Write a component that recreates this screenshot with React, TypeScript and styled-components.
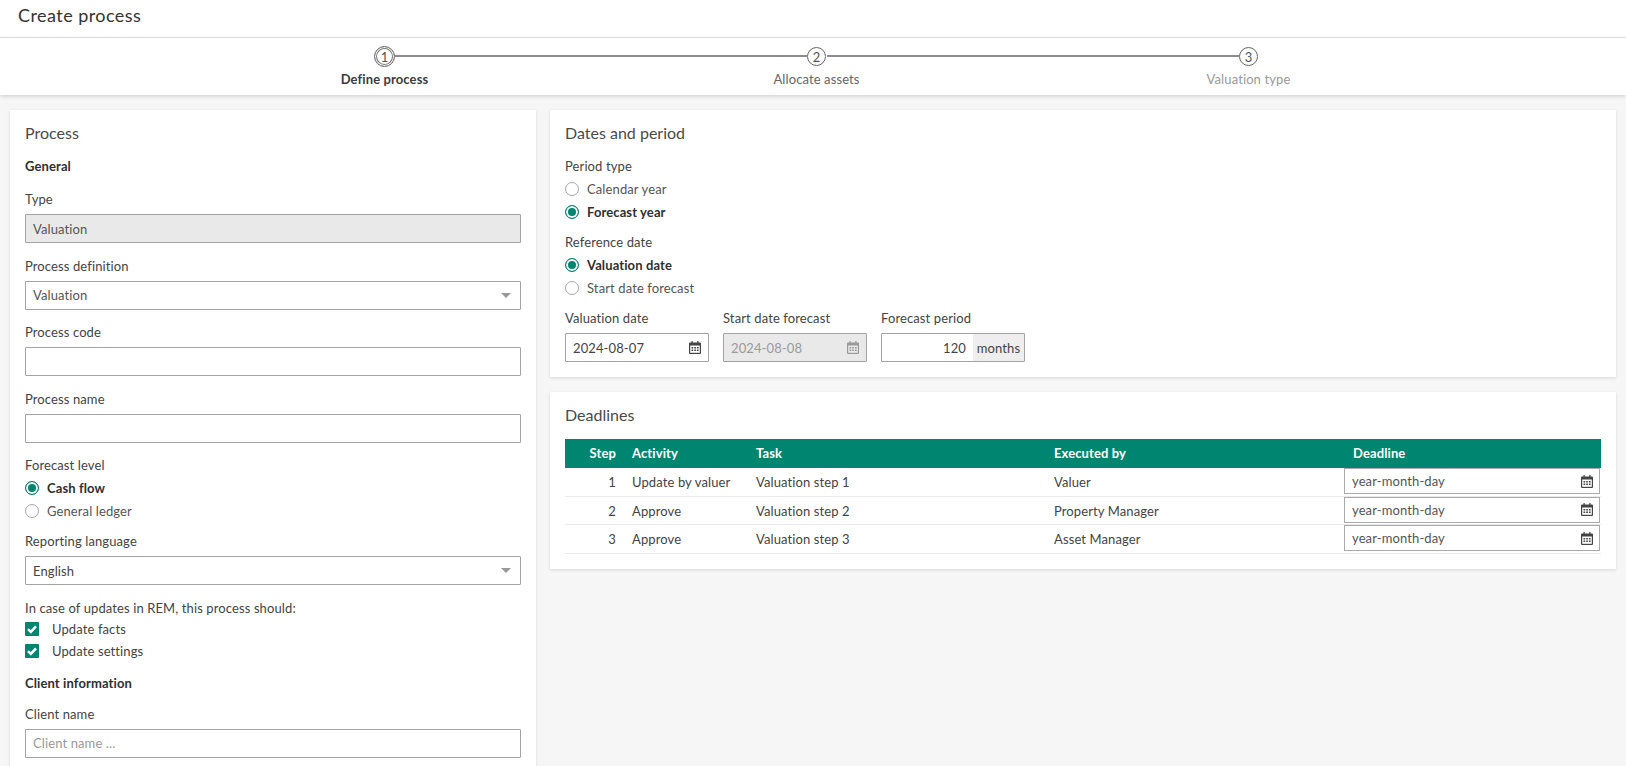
import styled, { createGlobalStyle } from "styled-components";

////////////////////////////////////////////////////
//////////////////// GLOBAL ////////////////////////
////////////////////////////////////////////////////

const GlobalStyle = createGlobalStyle`
   html, body {
      margin: 0;
      height: 100%;
      overflow: hidden;
      background: #f6f6f6;
      color: #3c3c3c;
      font-family: "Lato", "Open Sans", sans-serif;
      font-size: 13px;
      letter-spacing: 0.11px;
   }
   * {
      box-sizing: border-box;
   }
`;

////////////////////////////////////////////////////
//////////////////// ICONS /////////////////////////
////////////////////////////////////////////////////

const CalendarIcon = ({ muted }: { muted?: boolean }) => (
   <CalendarSvg viewBox="0 0 12 13" $muted={muted}>
      <path d="M2.5 0h1.2v1.5h4.6V0h1.2v1.5H11a1 1 0 0 1 1 1V12a1 1 0 0 1-1 1H1a1 1 0 0 1-1-1V2.500a1 1 0 0 1 1-1h1.500z" />
      <path className="hole" d="M1.2 4.500h9.600v7.300H1.200z" />
      <path d="M2.500 6h1.700v1.400H2.500zM5.200 6h1.700v1.400H5.200zM7.900 6h1.700v1.400H7.900zM2.500 8.500h1.700v1.400H2.500zM5.200 8.500h1.700v1.400H5.200zM7.900 8.500h1.700v1.400H7.900z" />
   </CalendarSvg>
);

const CheckIcon = () => (
   <svg width="14" height="14" viewBox="0 0 14 14" fill="none">
      <path d="M3 7.200l2.800 2.700L11 4.400" stroke="#fff" strokeWidth="2.500" />
   </svg>
);

////////////////////////////////////////////////////
//////////////////// PARTS /////////////////////////
////////////////////////////////////////////////////

const Field = (props: { label: string; children: React.ReactNode }) => (
   <FieldWrap>
      <Label>{props.label}</Label>
      {props.children}
   </FieldWrap>
);

const Radio = (props: { label: string; checked?: boolean }) => (
   <RadioRow $checked={props.checked}>
      <RadioDot $checked={props.checked} />
      {props.label}
   </RadioRow>
);

const Check = (props: { label: string }) => (
   <CheckRow>
      <CheckBox><CheckIcon /></CheckBox>
      {props.label}
   </CheckRow>
);

const steps = [
   { n: 1, label: "Define process", state: "active" },
   { n: 2, label: "Allocate assets", state: "next" },
   { n: 3, label: "Valuation type", state: "later" },
];

const deadlines = [
   { step: 1, activity: "Update by valuer", task: "Valuation step 1", by: "Valuer" },
   { step: 2, activity: "Approve", task: "Valuation step 2", by: "Property Manager" },
   { step: 3, activity: "Approve", task: "Valuation step 3", by: "Asset Manager" },
];

export default function App() {
   return (
      <>
         <GlobalStyle />
         <TopBar>Create process</TopBar>
         <Stepper>
            {steps.map((s, i) => (
               <Step key={s.n} $last={i === steps.length - 1}>
                  <StepCircle $active={s.state === "active"}>{s.n}</StepCircle>
                  <StepLabel $state={s.state}>{s.label}</StepLabel>
               </Step>
            ))}
         </Stepper>
         <Content>
            <Card>
               <CardTitle>Process</CardTitle>
               <SectionTitle>General</SectionTitle>
               <Field label="Type">
                  <TextBox $disabled>Valuation</TextBox>
               </Field>
               <Field label="Process definition">
                  <SelectBox $dim>Valuation<Caret /></SelectBox>
               </Field>
               <Field label="Process code">
                  <TextBox />
               </Field>
               <Field label="Process name">
                  <TextBox />
               </Field>
               <Label>Forecast level</Label>
               <RadioGroup>
                  <Radio label="Cash flow" checked />
                  <Radio label="General ledger" />
               </RadioGroup>
               <Field label="Reporting language">
                  <SelectBox>English<Caret /></SelectBox>
               </Field>
               <Label>In case of updates in REM, this process should:</Label>
               <CheckGroup>
                  <Check label="Update facts" />
                  <Check label="Update settings" />
               </CheckGroup>
               <SectionTitle $second>Client information</SectionTitle>
               <Field label="Client name">
                  <TextBox $placeholder>Client name ...</TextBox>
               </Field>
            </Card>
            <RightColumn>
               <Card>
                  <CardTitle>Dates and period</CardTitle>
                  <SmallGap />
                  <Label>Period type</Label>
                  <RadioGroup>
                     <Radio label="Calendar year" />
                     <Radio label="Forecast year" checked />
                  </RadioGroup>
                  <Label>Reference date</Label>
                  <RadioGroup>
                     <Radio label="Valuation date" checked />
                     <Radio label="Start date forecast" />
                  </RadioGroup>
                  <DateRow>
                     <DateField>
                        <Label>Valuation date</Label>
                        <DateBox>2024-08-07<CalendarIcon /></DateBox>
                     </DateField>
                     <DateField>
                        <Label>Start date forecast</Label>
                        <DateBox $disabled>2024-08-08<CalendarIcon muted /></DateBox>
                     </DateField>
                     <DateField>
                        <Label>Forecast period</Label>
                        <PeriodBox>
                           <PeriodValue>120</PeriodValue>
                           <PeriodUnit>months</PeriodUnit>
                        </PeriodBox>
                     </DateField>
                  </DateRow>
               </Card>
               <Card>
                  <CardTitle>Deadlines</CardTitle>
                  <Table>
                     <colgroup>
                        <col style={{ width: 59 }} />
                        <col style={{ width: 124 }} />
                        <col style={{ width: 298 }} />
                        <col style={{ width: 298 }} />
                        <col />
                     </colgroup>
                     <thead>
                        <tr>
                           <HeadCell $right>Step</HeadCell>
                           <HeadCell>Activity</HeadCell>
                           <HeadCell>Task</HeadCell>
                           <HeadCell>Executed by</HeadCell>
                           <HeadCell $wide>Deadline</HeadCell>
                        </tr>
                     </thead>
                     <tbody>
                        {deadlines.map((d) => (
                           <tr key={d.step}>
                              <BodyCell $right>{d.step}</BodyCell>
                              <BodyCell>{d.activity}</BodyCell>
                              <BodyCell>{d.task}</BodyCell>
                              <BodyCell>{d.by}</BodyCell>
                              <InputCell>
                                 <CellDate>year-month-day<CalendarIcon /></CellDate>
                              </InputCell>
                           </tr>
                        ))}
                     </tbody>
                  </Table>
               </Card>
            </RightColumn>
         </Content>
      </>
   );
}

////////////////////////////////////////////////////
//////////////// STYLED COMPONENTS /////////////////
////////////////////////////////////////////////////

const TopBar = styled.div`
   height: 38px;
   padding-left: 18px;
   background: #fff;
   border-bottom: 1px solid #e4e4e4;
   font-size: 18px;
   letter-spacing: 0.45px;
   line-height: 30px;
   color: #333;
`;
const Stepper = styled.div`
   position: relative;
   display: grid;
   grid-template-columns: repeat(3, 432px);
   justify-content: center;
   height: 57px;
   padding-left: 7px;
   background: #fff;
   box-shadow: 0 1px 4px rgba(0, 0, 0, 0.18);
`;
const Step = styled.div<{ $last?: boolean }>`
   position: relative;
   display: flex;
   flex-direction: column;
   align-items: center;
   padding-top: 9px;
   &::after {
      content: "";
      display: ${(p) => (p.$last ? "none" : "block")};
      position: absolute;
      top: 17px;
      left: calc(50% + 10px);
      width: 412px;
      height: 2px;
      background: #8c8c8c;
   }
`;
const StepCircle = styled.div<{ $active?: boolean }>`
   display: flex;
   align-items: center;
   justify-content: center;
   width: ${(p) => (p.$active ? "21px" : "19px")};
   height: ${(p) => (p.$active ? "21px" : "19px")};
   margin: ${(p) => (p.$active ? "-1px 0" : "0")};
   border: 1px solid #666;
   border-radius: 50%;
   color: #555;
   font-size: 13px;
   box-shadow: ${(p) => (p.$active ? "inset 0 0 0 1px #fff, inset 0 0 0 2px #777" : "none")};
`;
const StepLabel = styled.div<{ $state: string }>`
   margin-top: 5px;
   line-height: 17px;
   font-weight: ${(p) => (p.$state === "active" ? 700 : 400)};
   color: ${(p) => (p.$state === "active" ? "#3c3c3c" : p.$state === "next" ? "#666" : "#999")};
`;
const Content = styled.div`
   display: grid;
   grid-template-columns: 526px 1fr;
   column-gap: 14px;
   align-items: start;
   padding: 15px 10px 0;
`;
const RightColumn = styled.div`
   display: flex;
   flex-direction: column;
   gap: 14.500px;
`;
const Card = styled.div`
   padding: 13px 15px 15px;
   background: #fff;
   box-shadow: 0 1px 3px rgba(0, 0, 0, 0.12);
`;
const CardTitle = styled.div`
   font-size: 16px;
   letter-spacing: 0;
   line-height: 20px;
   color: #4a4a4a;
`;
const SmallGap = styled.div`
   height: 14px;
`;
const SectionTitle = styled.div<{ $second?: boolean }>`
   margin-top: ${(p) => (p.$second ? "11px" : "13px")};
   margin-bottom: ${(p) => (p.$second ? "12px" : "14px")};
   font-weight: 700;
   line-height: 20px;
   color: #2f2f2f;
`;
const FieldWrap = styled.div`
   margin-bottom: 13.500px;
`;
const Label = styled.div`
   line-height: 20px;
   margin-top: -1px;
   margin-bottom: 5px;
   color: #444;
`;
const boxBase = `
   display: flex;
   align-items: center;
   height: 29px;
   padding: 0 7px;
   border: 1px solid #a3a3a3;
   border-radius: 1px;
   background: #fff;
   color: #444;
   font-size: 13px;
`;
const TextBox = styled.div<{ $disabled?: boolean; $placeholder?: boolean }>`
   ${boxBase}
   background: ${(p) => (p.$disabled ? "#e9e9e9" : "#fff")};
   color: ${(p) => (p.$placeholder ? "#999" : p.$disabled ? "#555" : "#444")};
`;
const SelectBox = styled.div<{ $dim?: boolean }>`
   ${boxBase}
   justify-content: space-between;
   color: ${(p) => (p.$dim ? "#555" : "#444")};
`;
const Caret = styled.span`
   width: 0;
   height: 0;
   margin-right: 2px;
   border-left: 5px solid transparent;
   border-right: 5px solid transparent;
   border-top: 5px solid #999;
`;
const RadioGroup = styled.div`
   display: flex;
   flex-direction: column;
   margin-top: -4px;
   margin-bottom: 9px;
`;
const RadioRow = styled.div<{ $checked?: boolean }>`
   display: flex;
   align-items: center;
   gap: 8px;
   height: 23.500px;
   font-weight: ${(p) => (p.$checked ? 700 : 400)};
   color: ${(p) => (p.$checked ? "#2f2f2f" : "#555")};
`;
const RadioDot = styled.span<{ $checked?: boolean }>`
   flex: none;
   width: 14px;
   height: 14px;
   border-radius: 50%;
   border: 1px solid ${(p) => (p.$checked ? "#008571" : "#a8a8a8")};
   background: ${(p) => (p.$checked ? "#008571" : "#fff")};
   box-shadow: ${(p) => (p.$checked ? "inset 0 0 0 2px #fff" : "none")};
`;
const CheckGroup = styled.div`
   display: flex;
   flex-direction: column;
   margin-top: -4px;
`;
const CheckRow = styled.div`
   display: flex;
   align-items: center;
   gap: 13px;
   height: 21.500px;
   color: #444;
`;
const CheckBox = styled.span`
   flex: none;
   width: 14px;
   height: 14px;
   border-radius: 1px;
   background: #008571;
   svg {
      display: block;
   }
`;
const DateRow = styled.div`
   display: flex;
   gap: 14px;
   margin-top: 7.500px;
`;
const DateField = styled.div`
   width: 144px;
`;
const DateBox = styled.div<{ $disabled?: boolean }>`
   ${boxBase}
   justify-content: space-between;
   padding-right: 7px;
   background: ${(p) => (p.$disabled ? "#e9e9e9" : "#fff")};
   color: ${(p) => (p.$disabled ? "#9a9a9a" : "#444")};
`;
const CalendarSvg = styled.svg<{ $muted?: boolean }>`
   flex: none;
   width: 12px;
   height: 13px;
   fill: ${(p) => (p.$muted ? "#9a9a9a" : "#444")};
   .hole {
      fill: ${(p) => (p.$muted ? "#e9e9e9" : "#fff")};
   }
`;
const PeriodBox = styled.div`
   ${boxBase}
   padding: 0;
`;
const PeriodValue = styled.div`
   flex: 1;
   padding-right: 7px;
   text-align: right;
`;
const PeriodUnit = styled.div`
   display: flex;
   align-items: center;
   justify-content: center;
   width: 51px;
   height: 100%;
   background: #eee;
`;
const Table = styled.table`
   width: 100%;
   margin-top: 14px;
   border-collapse: collapse;
   table-layout: fixed;
`;
const HeadCell = styled.th<{ $right?: boolean; $wide?: boolean }>`
   height: 29px;
   padding: 0 8px 0 ${(p) => (p.$wide ? "9px" : "8px")};
   background: #008571;
   color: #fff;
   font-size: 13px;
   font-weight: 700;
   text-align: ${(p) => (p.$right ? "right" : "left")};
`;
const BodyCell = styled.td<{ $right?: boolean }>`
   height: 28.500px;
   padding: 1px 8px 0;
   border-bottom: 1px solid #eaeaea;
   color: #444;
   text-align: ${(p) => (p.$right ? "right" : "left")};
`;
const InputCell = styled.td`
   height: 28.500px;
   padding: 0 1px 1px 0;
   border-bottom: 1px solid #eaeaea;
`;
const CellDate = styled.div`
   display: flex;
   align-items: center;
   justify-content: space-between;
   height: 26px;
   padding: 0 6px 0 7px;
   border: 1px solid #aaa;
   color: #555;
`;
